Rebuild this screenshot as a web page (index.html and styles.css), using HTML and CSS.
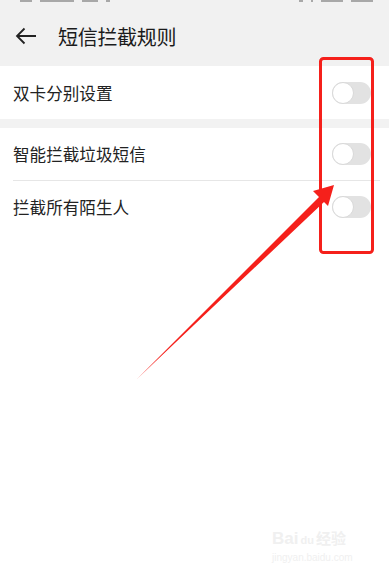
FILE: index.html
```html
<!DOCTYPE html>
<html lang="zh">
<head>
<meta charset="utf-8">
<title>短信拦截规则</title>
<link rel="stylesheet" href="styles.css">
</head>
<body>
<div class="page">
  <div class="status">
    <div class="st-left"><i class="b w6"></i><i class="b w12"></i><i class="b w10"></i><i class="b w4"></i></div>
    <div class="st-right"><i class="b w4"></i><i class="b w2"></i><i class="b w20"></i><i class="b w20"></i></div>
  </div>
  <header class="topbar">
    <svg class="back" width="22" height="18" viewBox="0 0 22 18"><path d="M21 9H2M9.5 1.5L2 9l7.5 7.5" fill="none" stroke="#222" stroke-width="1.8"/></svg>
    <h1 class="title">短信拦截规则</h1>
  </header>
  <section class="group">
    <div class="row"><span class="label">双卡分别设置</span><span class="toggle"><span class="knob"></span></span></div>
  </section>
  <section class="group second">
    <div class="row"><span class="label">智能拦截垃圾短信</span><span class="toggle"><span class="knob"></span></span></div>
    <div class="divider"></div>
    <div class="row"><span class="label">拦截所有陌生人</span><span class="toggle"><span class="knob"></span></span></div>
  </section>
  <div class="watermark">
    <div class="wm-logo">Bai<span class="du">du</span><span class="jy">经验</span></div>
    <div class="wm-url">jingyan.baidu.com</div>
  </div>
  <svg class="annot" width="389" height="582" viewBox="0 0 389 582">
    <rect x="320.5" y="58.5" width="52" height="194" rx="3" fill="none" stroke="#f5201b" stroke-width="3"/>
    <path d="M137 379 L319 197 L313 191 L334 185 L328 206 L324 202 Z" fill="#f5201b"/>
  </svg>
</div>
</body>
</html>
```
FILE: styles.css
```css
* { box-sizing: border-box; margin: 0; padding: 0; }
html, body { width: 389px; height: 582px; overflow: hidden; }
body { background: #fff; font-family: "Noto Sans CJK SC", "Noto Sans", sans-serif; color: #222; }
.page { position: relative; width: 389px; height: 582px; background: #fff; }
.status { height: 8px; background: #f1f1f1; display: flex; justify-content: space-between; padding: 0 16px 0 20px; }
.st-left, .st-right { display: flex; gap: 8px; align-items: flex-start; }
.b { display: block; height: 2px; background: #a8a8a8; }
.w2 { width: 2px; } .w4 { width: 4px; } .w6 { width: 12px; } .w10 { width: 16px; } .w12 { width: 34px; } .w20 { width: 22px; }
.topbar { height: 58px; background: #f1f1f1; display: flex; align-items: center; padding: 0 0 2px 15px; }
.back { margin-right: 21px; }
.title { font-size: 20px; font-weight: 400; color: #1b1b1b; letter-spacing: -0.3px; }
.group { background: #fff; }
.second { border-top: 9px solid #f2f2f2; }
.row { height: 52px; display: flex; align-items: center; justify-content: space-between; padding: 0 18px 0 13px; }
.group:first-of-type .row { height: 53px; }
.label { font-size: 16.6px; color: #222; }
.toggle { width: 39px; height: 22px; border-radius: 11px; background: #e2e2e2; position: relative; }
.knob { position: absolute; left: 0; top: 0; width: 22px; height: 22px; border-radius: 50%; background: #fff; border: 1px solid #d9d9d9; }
.divider { height: 1px; background: #e6e6e6; margin: 0 9px 0 13px; }
.watermark { position: absolute; left: 272px; top: 528px; color: #f0f0f0; font-family: "Liberation Sans", sans-serif; }
.wm-logo { font-size: 17px; font-weight: 700; line-height: 20px; }
.du { font-size: 11px; margin-left: 2px; }
.jy { font-family: "Noto Sans CJK SC", sans-serif; font-size: 15px; margin-left: 2px; }
.wm-url { font-size: 10px; line-height: 12px; margin-top: 2px; }
.annot { position: absolute; left: 0; top: 0; pointer-events: none; }
```
